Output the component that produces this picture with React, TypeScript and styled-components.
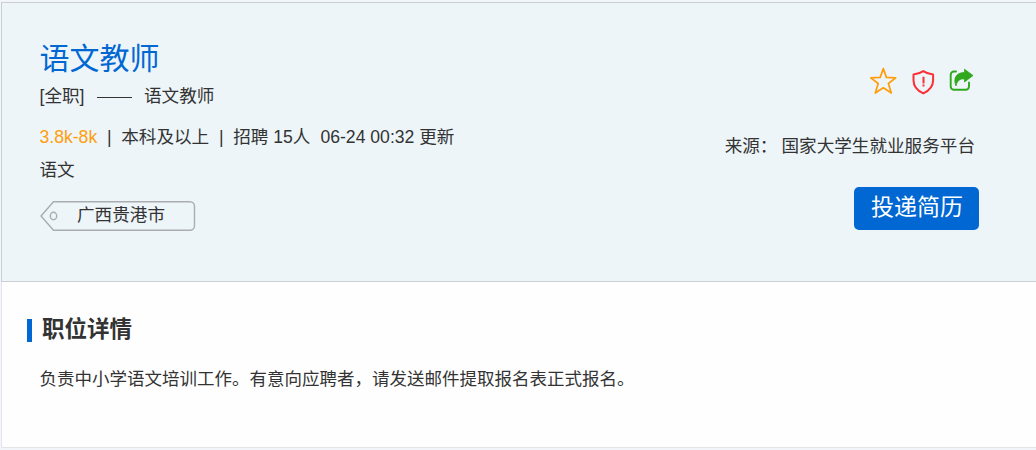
import React from 'react'
import styled, { createGlobalStyle } from 'styled-components'

const App = () => {
    return (
        <>
            <GlobalStyle />
            <Page>
                <JobHeader>
                    <JobInfo>
                        <JobTitle>语文教师</JobTitle>
                        <JobType>
                            <span>[全职]</span>
                            <Dash />
                            <span>语文教师</span>
                        </JobType>
                        <MetaRow>
                            <Salary>3.8k-8k</Salary>
                            <Divider>|</Divider>
                            <span>本科及以上</span>
                            <Divider>|</Divider>
                            <span>招聘 15人</span>
                            <UpdateTime>06-24 00:32 更新</UpdateTime>
                        </MetaRow>
                        <Major>语文</Major>
                        <CityTag>
                            <TagShape />
                            <CityName>广西贵港市</CityName>
                        </CityTag>
                    </JobInfo>
                    <JobAction>
                        <IconRow>
                            <StarIcon />
                            <ReportIcon />
                            <ShareIcon />
                        </IconRow>
                        <Source>
                            <span>来源：</span>
                            <span>国家大学生就业服务平台</span>
                        </Source>
                        <ApplyButton>投递简历</ApplyButton>
                    </JobAction>
                </JobHeader>
                <Detail>
                    <DetailTitle>职位详情</DetailTitle>
                    <DetailText>负责中小学语文培训工作。有意向应聘者，请发送邮件提取报名表正式报名。</DetailText>
                </Detail>
            </Page>
        </>
    )
}

export default App

const TagShape = () => (
    <TagSvg width="156" height="30" viewBox="0 0 156 30" fill="none">
        <path d="M13.5 .7H150a4.5 4.5 0 0 1 4.5 4.5v19.6a4.5 4.5 0 0 1-4.5 4.5H13.5L1 15Z" stroke="#a9adaf" strokeWidth="1.4" />
        <ellipse cx="13.5" cy="15" rx="3.2" ry="3.7" stroke="#a9adaf" strokeWidth="1.4" />
    </TagSvg>
)

const StarIcon = () => (
    <svg width="28" height="28" viewBox="0 0 28 28" fill="none">
        <path d="M14.3 1.6 17.4 10.4 26.7 10.8 19.4 16.5 22.3 26 14.3 20.8 6.3 26 9.2 16.5 1.8 10.8 11.2 10.4Z" stroke="#ff9d0a" strokeWidth="1.7" strokeLinejoin="round" />
    </svg>
)

const ReportIcon = () => (
    <svg width="24" height="28" viewBox="0 0 24 28" fill="none">
        <path d="M12.3 4.1C9.5 6 6.1 7.2 2.5 7.5V13.3c0 6 3.8 10.4 9.8 13.1 6-2.7 9.8-7.1 9.8-13.1V7.5C18.5 7.2 15.1 6 12.3 4.1Z" stroke="#fb2f36" strokeWidth="2" strokeLinejoin="round" />
        <path d="M12.5 9.8v6.6M12.5 17.5v2" stroke="#fb2f36" strokeWidth="2" />
    </svg>
)

const ShareIcon = () => (
    <svg width="25" height="28" viewBox="0.5 0 25 28" fill="none">
        <path d="M7.5 4.5H5.5a3.3 3.3 0 0 0-3.3 3.3V19.5a3.3 3.3 0 0 0 3.3 3.3h11.7a3.3 3.3 0 0 0 3.3-3.3v-4" stroke="#30a81d" strokeWidth="1.9" strokeLinecap="round" />
        <path d="M16 2.2 24.5 8.5 16 15V12C11.5 11.4 8.8 13.300 7.500 19 4.500 11.300 7.500 5.600 16 5.500Z" fill="#30a81d" stroke="#30a81d" strokeWidth=".8" strokeLinejoin="round" />
    </svg>
)

const GlobalStyle = createGlobalStyle`
    body {
        margin: 0;
        color: #333;
        background: #f2f5f9;
        font-family: "Liberation Sans", "Noto Sans CJK SC", sans-serif;
        font-size: 17.6px;
    }

    * {
        box-sizing: border-box;
    }
`

const Page = styled.div`
    height: 450px;
    padding: 2px 0 0 1px;
    overflow: hidden;
`

const JobHeader = styled.div`
    display: flex;
    justify-content: space-between;
    height: 280px;
    padding: 35px 57px 0 37.5px;
    background: #edf5f9;
    border: 1px solid #c9cfd2;
    border-right: 0;
`

const JobInfo = styled.div`
    display: flex;
    flex-direction: column;
    align-items: flex-start;
`

const JobTitle = styled.h1`
    margin: 0;
    color: #0168d3;
    font-size: 30px;
    font-weight: 400;
    line-height: 42px;
`

const JobType = styled.div`
    display: flex;
    align-items: center;
    height: 32px;
    line-height: 32px;
`

const Dash = styled.div`
    width: 35px;
    height: 1px;
    margin: 3px 12px 0 12.5px;
    background: #333;
`

const MetaRow = styled.div`
    display: flex;
    margin-top: 8px;
    line-height: 34px;
    white-space: pre;
`

const Salary = styled.span`
    color: #ff9d0a;
`

const Divider = styled.span`
    width: 24px;
    text-align: center;
`

const UpdateTime = styled.span`
    margin-left: 10px;
`

const Major = styled.div`
    line-height: 33px;
`

const CityTag = styled.div`
    position: relative;
    width: 156px;
    height: 30px;
    margin-top: 14px;
    padding-left: 37.5px;
`

const TagSvg = styled.svg`
    position: absolute;
    top: 0;
    left: 0;
`

const CityName = styled.span`
    display: block;
    line-height: 28px;
`

const JobAction = styled.div`
    display: flex;
    flex-direction: column;
    align-items: flex-end;
    padding-top: 29px;
`

const IconRow = styled.div`
    display: flex;
    gap: 14px;
    margin-right: 5px;
`

const Source = styled.div`
    display: flex;
    gap: 4px;
    margin: 35px 4px 0 0;
    line-height: 32px;
`

const ApplyButton = styled.button`
    width: 125px;
    height: 43px;
    margin-top: 25px;
    padding: 0 0 2px 1px;
    border: 0;
    border-radius: 5px;
    background: #0168d3;
    color: #fff;
    font-family: inherit;
    font-size: 23px;
    line-height: 41px;
`

const Detail = styled.div`
    height: 166px;
    padding: 35px 0 0 25px;
    background: #fefefe;
    border-left: 1px solid #e3e6ee;
    border-bottom: 1px solid #e3e5e8;
`

const DetailTitle = styled.h2`
    display: flex;
    align-items: center;
    margin: 0;
    font-size: 22.5px;
    line-height: 26px;

    &::before {
        content: '';
        width: 5px;
        height: 23px;
        margin-right: 10px;
        background: #0168d3;
    }
`

const DetailText = styled.p`
    margin: 20px 0 0 12.5px;
    font-size: 17.5px;
    line-height: 32px;
`
